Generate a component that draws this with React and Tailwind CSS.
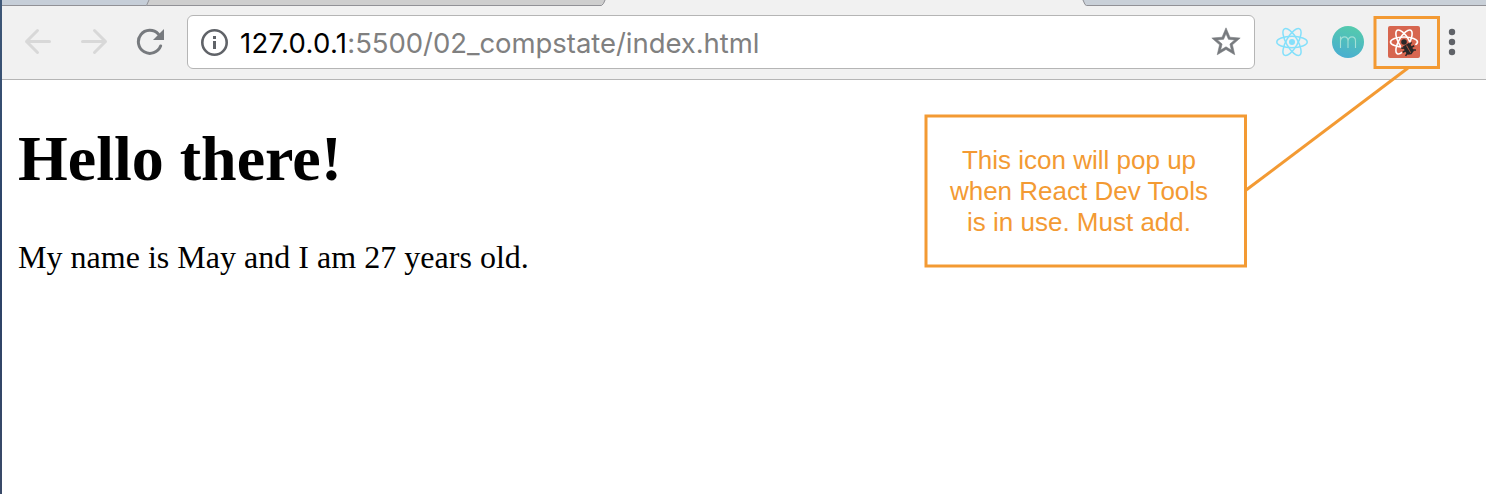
import React from "react";

function TabStrip() {
  return (
    <svg className="block h-[6px] w-full shrink-0" viewBox="2 0 1484 6" preserveAspectRatio="none">
      <rect x="2" y="0" width="1484" height="6" fill="#f1f1f1" />
      <path d="M2 0H149L146.500 5.500H2Z" fill="#c6ced8" />
      <path d="M149 0H605.500L603 4.500L601.500 5.500H146.500Z" fill="#cecece" />
      <path d="M1082.500 0L1085 4.500L1086 5.500H1486V0Z" fill="#c9d0d8" />
      <path d="M2 5.500H146.500L149 0M146.500 5.500H601.500L603.500 3.500L605 0M1083 0L1085 4.500L1086.500 5.500H1486" fill="none" stroke="#919196" />
    </svg>
  );
}

function Arrow({ forward }) {
  return (
    <svg className={forward ? "size-7 -scale-x-100" : "size-7"} viewBox="0 0 28 28" fill="none" stroke="#d8d8d8" strokeWidth="3" strokeLinecap="round" strokeLinejoin="round">
      <path d="M25.500 13.500H2.500M13.500 2.500L2.500 13.500L13.500 24.500" />
    </svg>
  );
}

function Reload() {
  return (
    <svg className="size-7" viewBox="0 0 28 28">
      <path d="M24.600 18A11.500 11.500 0 1 1 22.300 6" fill="none" stroke="#777a7e" strokeWidth="3" strokeLinecap="round" />
      <path d="M28 1V12H17Z" fill="#777a7e" />
    </svg>
  );
}

function Info() {
  return (
    <svg className="size-7" viewBox="0 0 28 28" fill="#606368">
      <circle cx="13.500" cy="14.500" r="12.200" fill="none" stroke="#606368" strokeWidth="2.600" />
      <rect x="12" y="8" width="3" height="3" />
      <rect x="12" y="13" width="3" height="8" />
    </svg>
  );
}

function Star() {
  return (
    <svg className="size-[34px]" viewBox="0 0 24 24" fill="#777a7e" stroke="#777a7e" strokeWidth="0.400">
      <path d="M22 9.240l-7.190-.620L12 2 9.190 8.630 2 9.240l5.460 4.730L5.820 21 12 17.270 18.180 21l-1.630-7.030L22 9.240zM12 15.400l-3.760 2.270 1-4.280-3.320-2.880 4.380-.380L12 6.100l1.710 4.040 4.380.380-3.320 2.880 1 4.280L12 15.400z" />
    </svg>
  );
}

function ReactMark() {
  return (
    <svg className="size-8" viewBox="-16 -16 32 32" fill="none" stroke="#84e0fb" strokeWidth="1.500">
      <ellipse rx="15.200" ry="5.700" />
      <ellipse rx="15.200" ry="5.700" transform="rotate(60)" />
      <ellipse rx="15.200" ry="5.700" transform="rotate(120)" />
      <circle r="3" fill="#84e0fb" stroke="none" />
    </svg>
  );
}

function MomentumMark() {
  return (
    <svg className="size-8" viewBox="0 0 32 32">
      <defs>
        <linearGradient id="momentum" x1="0.650" y1="0" x2="0.350" y2="1">
          <stop offset="0" stopColor="#55cbac" />
          <stop offset="1" stopColor="#49aed1" />
        </linearGradient>
      </defs>
      <circle cx="16" cy="16" r="16" fill="url(#momentum)" />
      <path d="M8.500 22V10.500M8.500 15Q9 10.900 12.600 10.900Q16 10.900 16 15V22M16 15Q16.500 10.900 20 10.900Q23.500 10.900 23.500 15V22" fill="none" stroke="#a3dfd6" strokeWidth="1.100" />
    </svg>
  );
}

function DebugReactMark() {
  return (
    <svg className="size-8" viewBox="0 0 32 32">
      <rect width="32" height="32" rx="2" fill="#d7664f" />
      <g fill="none" stroke="#fff" strokeWidth="1.600" transform="translate(16 16)">
        <ellipse rx="13.500" ry="5" />
        <ellipse rx="13.500" ry="5.200" transform="rotate(60)" />
        <ellipse rx="13.500" ry="5.200" transform="rotate(120)" />
      </g>
      <path d="M13 19L19 16L26 17L29 21V28L21 31L14 27Z" fill="#d7664f" />
      <circle cx="16" cy="16" r="2.800" fill="#282828" />
      <g transform="translate(20.500 23) rotate(-30)" fill="#282828" stroke="#282828">
        <path d="M-3.600 -5H3.600L4.100 0L3.600 4.500L0 6L-3.600 4.500L-4.100 0Z" stroke="none" />
        <path d="M-3 -3L-6 -4.200M-3 0H-6.500M-3 3L-6 4.500M3 -3L6 -4.200M3 0H6.500M3 3L6 4.500" strokeWidth="1.500" />
        <path d="M0 -4V4.500" stroke="#b8583f" strokeWidth=".9" />
      </g>
    </svg>
  );
}

function MenuDots() {
  return (
    <svg className="h-8 w-2" viewBox="0 0 8 32" fill="#606368">
      <circle cx="4" cy="6" r="3.200" />
      <circle cx="4" cy="16" r="3.200" />
      <circle cx="4" cy="26" r="3.200" />
    </svg>
  );
}

function Toolbar() {
  return (
    <div className="flex h-[74px] shrink-0 items-start border-b border-[#b5b5b5] bg-[#f1f1f1] pl-[22px] pt-[9px]">
      <div className="flex h-[54px] w-[163px] shrink-0 items-center gap-7">
        <Arrow />
        <Arrow forward />
        <Reload />
      </div>
      <div className="flex h-[54px] w-[1068px] shrink-0 items-center rounded-[6px] border border-[#b5b5b5] bg-white pl-[13px] pr-[11px]">
        <Info />
        <div className="ml-[11px] flex-1 whitespace-nowrap pt-[1px] font-[Inter,sans-serif] text-[27.5px] leading-[34px] tracking-[-0.050px] text-[#808080]">
          <span className="tracking-[0.300px] text-black">127.0.0.1</span>:5500/02_compstate/index.html
        </div>
        <Star />
      </div>
      <div className="ml-[21px] flex h-[54px] items-center gap-6">
        <ReactMark />
        <MomentumMark />
        <DebugReactMark />
        <div className="ml-1 flex"><MenuDots /></div>
      </div>
    </div>
  );
}

function Annotation() {
  return (
    <div className="pointer-events-none absolute inset-0">
      <svg className="absolute inset-0 h-[494px] w-[1486px]" viewBox="0 0 1486 494" fill="none" stroke="#f39a33" strokeWidth="3">
        <path d="M1245.500 190.500L1408 68" />
        <rect x="1375" y="17.500" width="63.500" height="50" />
        <rect x="926" y="116" width="319.500" height="150" fill="#fff" />
      </svg>
      <div className="absolute left-[924px] top-[114px] flex h-[154px] w-[323px] justify-center pr-[13px] pt-[31px] text-center font-['Liberation_Sans',sans-serif] text-[26px] leading-[31px] text-[#f39a33]">
        <p className="whitespace-nowrap">This icon will pop up<br />when React Dev Tools<br />is in use. Must add.</p>
      </div>
    </div>
  );
}

export default function App() {
  return (
    <div className="relative flex h-[494px] w-[1486px] overflow-hidden bg-white">
      <div className="w-[2px] shrink-0 bg-linear-to-b from-[#3f5878] via-[#2a4167] to-[#3a4a68]" />
      <div className="flex min-w-0 flex-1 flex-col">
        <TabStrip />
        <Toolbar />
        <main className="pl-4 pt-[42px] font-['Liberation_Serif',serif] text-black">
          <h1 className="text-[64px] font-bold leading-[74px]">Hello there!</h1>
          <p className="mt-[43px] text-[32px] leading-[37px] tracking-[0.020px]">My name is May and I am 27 years old.</p>
        </main>
      </div>
      <Annotation />
    </div>
  );
}
